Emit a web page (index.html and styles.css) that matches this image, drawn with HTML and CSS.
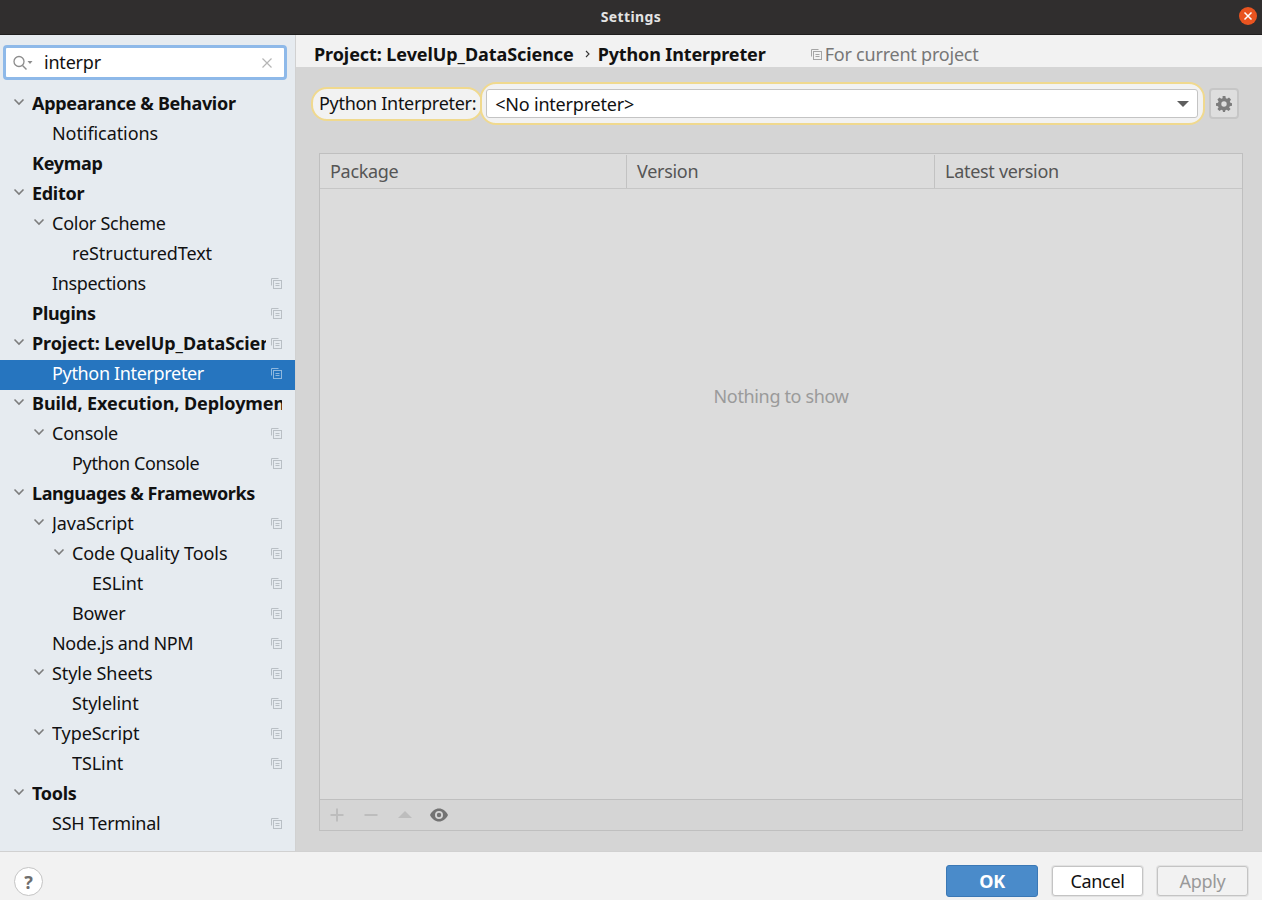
FILE: index.html
```html
<!DOCTYPE html>
<html lang="en">
<head>
<meta charset="utf-8">
<title>Settings</title>
<link rel="stylesheet" href="styles.css">
</head>
<body>
<svg class="defs" width="0" height="0">
  <defs>
    <symbol id="copy" viewBox="0 0 12 12">
      <path d="M8.500 1.500H1.500V8.500" fill="none" stroke="currentColor"/>
      <rect x="3.500" y="3.500" width="8" height="8" fill="none" stroke="currentColor"/>
      <path d="M5.500 6.500h4M5.500 8.500h4" stroke="currentColor"/>
    </symbol>
    <symbol id="chev" viewBox="0 0 12 12">
      <path d="M1.500 3.500L6 8L10.500 3.500" fill="none" stroke="currentColor" stroke-width="1.600"/>
    </symbol>
  </defs>
</svg>
<div class="app">
  <header class="titlebar">
    <span class="title">Settings</span>
    <span class="close"><svg width="10" height="10" viewBox="0 0 10 10"><path d="M1.500 1.500L8.500 8.500M8.500 1.500L1.500 8.500" stroke="#fff" stroke-width="1.500"/></svg></span>
  </header>
  <div class="mid">
    <aside class="sidebar">
      <div class="search">
        <svg class="search-ic" width="22" height="16" viewBox="0 0 22 16"><circle cx="7" cy="6.500" r="5" fill="none" stroke="#8c8c8c" stroke-width="1.300"/><path d="M10.500 10.500L14.500 14.500" stroke="#8c8c8c" stroke-width="1.500"/><path d="M15.500 6h5l-2.500 3z" fill="#8c8c8c"/></svg>
        <span class="search-text">interpr</span>
        <svg class="search-x" width="10" height="10" viewBox="0 0 10 10"><path d="M0.500 0.500L9.500 9.500M9.500 0.500L0.500 9.500" stroke="#b5b5b5" stroke-width="1.200"/></svg>
      </div>
      <nav class="tree">
        <div class="row l0 b"><svg class="chev"><use href="#chev"/></svg><span class="name">Appearance &amp; Behavior</span></div>
        <div class="row l1"><span class="name loose">Notifications</span></div>
        <div class="row l0 b"><span class="name">Keymap</span></div>
        <div class="row l0 b"><svg class="chev"><use href="#chev"/></svg><span class="name">Editor</span></div>
        <div class="row l1"><svg class="chev"><use href="#chev"/></svg><span class="name">Color Scheme</span></div>
        <div class="row l2"><span class="name loose">reStructuredText</span></div>
        <div class="row l1"><span class="name tight">Inspections</span><svg class="cp"><use href="#copy"/></svg></div>
        <div class="row l0 b"><span class="name">Plugins</span><svg class="cp"><use href="#copy"/></svg></div>
        <div class="row l0 b"><svg class="chev"><use href="#chev"/></svg><span class="name wide">Project: LevelUp_DataScience</span><svg class="cp"><use href="#copy"/></svg></div>
        <div class="row l1 sel"><span class="name tight">Python Interpreter</span><svg class="cp"><use href="#copy"/></svg></div>
        <div class="row l0 b"><svg class="chev"><use href="#chev"/></svg><span class="name wide">Build, Execution, Deployment</span></div>
        <div class="row l1"><svg class="chev"><use href="#chev"/></svg><span class="name">Console</span><svg class="cp"><use href="#copy"/></svg></div>
        <div class="row l2"><span class="name tight">Python Console</span><svg class="cp"><use href="#copy"/></svg></div>
        <div class="row l0 b"><svg class="chev"><use href="#chev"/></svg><span class="name narrow">Languages &amp; Frameworks</span></div>
        <div class="row l1"><svg class="chev"><use href="#chev"/></svg><span class="name loose">JavaScript</span><svg class="cp"><use href="#copy"/></svg></div>
        <div class="row l2"><svg class="chev"><use href="#chev"/></svg><span class="name loose">Code Quality Tools</span><svg class="cp"><use href="#copy"/></svg></div>
        <div class="row l3"><span class="name loose">ESLint</span><svg class="cp"><use href="#copy"/></svg></div>
        <div class="row l2"><span class="name loose">Bower</span><svg class="cp"><use href="#copy"/></svg></div>
        <div class="row l1"><span class="name tight">Node.js and NPM</span><svg class="cp"><use href="#copy"/></svg></div>
        <div class="row l1"><svg class="chev"><use href="#chev"/></svg><span class="name loose">Style Sheets</span><svg class="cp"><use href="#copy"/></svg></div>
        <div class="row l2"><span class="name loose">Stylelint</span><svg class="cp"><use href="#copy"/></svg></div>
        <div class="row l1"><svg class="chev"><use href="#chev"/></svg><span class="name loose">TypeScript</span><svg class="cp"><use href="#copy"/></svg></div>
        <div class="row l2"><span class="name loose">TSLint</span><svg class="cp"><use href="#copy"/></svg></div>
        <div class="row l0 b"><svg class="chev"><use href="#chev"/></svg><span class="name">Tools</span></div>
        <div class="row l1"><span class="name">SSH Terminal</span><svg class="cp"><use href="#copy"/></svg></div>
      </nav>
    </aside>
    <main class="main">
      <div class="crumbs">
        <span class="crumb">Project: LevelUp_DataScience</span>
        <svg class="crumb-sep" width="5" height="8" viewBox="0 0 5 8"><path d="M1 1L4 4L1 7" fill="none" stroke="#333" stroke-width="1.100"/></svg>
        <span class="crumb">Python Interpreter</span>
        <span class="scope"><svg class="cp scope-ic"><use href="#copy"/></svg>For current project</span>
      </div>
      <div class="content">
        <div class="interp">
          <label class="interp-label">Python Interpreter:</label>
          <div class="combo-glow">
            <div class="combo">
              <span>&lt;No interpreter&gt;</span>
              <svg width="12" height="6" viewBox="0 0 12 6"><path d="M0 0h12L6 6z" fill="#5e5e5e"/></svg>
            </div>
          </div>
          <button class="gear">
            <svg width="16" height="16" viewBox="0 0 16 16"><path fill="#7d7d7d" fill-rule="evenodd" d="M6.600 0h2.800l.4 2.200 1.300.6L13 1.600l2 2-1.200 1.900.6 1.300L16 7.200v2.600l-2.200.4-.6 1.300L14.600 13l-2 2-1.900-1.300-1.300.6L9 16H7l-.4-1.700-1.300-.6L3.400 15l-2-2 1.200-1.500-.6-1.300L0 9.800V7.200l2-.4.600-1.300L1.400 3.600l2-2 1.900 1.200 1.300-.6zM8 5.300a2.700 2.700 0 1 0 0 5.400 2.700 2.700 0 0 0 0-5.400z"/></svg>
          </button>
        </div>
        <section class="table">
          <div class="thead">
            <div class="th">Package</div>
            <div class="th">Version</div>
            <div class="th">Latest version</div>
          </div>
          <div class="tbody">Nothing to show</div>
          <div class="toolbar">
            <svg width="18" height="14" viewBox="0 0 18 14"><path d="M9 .5v13M2.500 7h13" stroke="#bdbdbd" stroke-width="2"/></svg>
            <svg width="18" height="14" viewBox="0 0 18 14"><path d="M2.500 7h13" stroke="#bdbdbd" stroke-width="2"/></svg>
            <svg width="18" height="14" viewBox="0 0 18 14"><path d="M9 3l7 7H2z" fill="#bdbdbd"/></svg>
            <svg width="18" height="14" viewBox="0 0 18 14"><path fill="#737373" fill-rule="evenodd" d="M9 .5c3.800 0 7 2.600 9 6.500-2 3.900-5.200 6.500-9 6.500S2 10.900 0 7C2 3.100 5.200.5 9 .5zM9 3a4 4 0 1 0 0 8 4 4 0 0 0 0-8z"/><circle cx="9" cy="7" r="2.200" fill="#737373"/></svg>
          </div>
        </section>
      </div>
    </main>
  </div>
  <footer class="footer">
    <button class="help">?</button>
    <div class="actions">
      <button class="btn ok">OK</button>
      <button class="btn">Cancel</button>
      <button class="btn off">Apply</button>
    </div>
  </footer>
</div>
</body>
</html>
```
FILE: styles.css
```css
* { box-sizing: border-box; }
html, body { margin: 0; padding: 0; }
body { width: 1262px; height: 900px; overflow: hidden; font-family: "Noto Sans", "Open Sans", sans-serif; font-size: 18px; color: #111; }
.defs { position: absolute; }
.app { display: flex; flex-direction: column; height: 900px; background: #f2f2f2; }

.titlebar { height: 35px; flex: none; background: #302e2e; border-bottom: 1px solid #1f1e1e; display: flex; align-items: center; justify-content: center; padding-bottom: 2px; position: relative; }
.title { font-size: 14px; font-weight: 700; color: #e3e3e3; letter-spacing: .4px; }
.close { position: absolute; right: 5px; top: 7px; width: 18px; height: 18px; border-radius: 50%; background: #e95420; display: flex; align-items: center; justify-content: center; }

.mid { flex: 1; display: flex; min-height: 0; }
.sidebar { width: 296px; flex: none; background: #e6ebf0; border-right: 1px solid #d1d1d1; padding-top: 10px; }
.search { margin: 0 8px 0 3px; height: 35px; border: 3px solid #8eb9e9; border-radius: 4px; background: #fff; display: flex; align-items: center; padding: 0 12px 0 6px; }
.search-ic { flex: none; }
.search-text { margin-left: 10px; flex: 1; letter-spacing: -.2px; padding-bottom: 2px; }
.tree { margin-top: 10px; }

.row { height: 30px; display: flex; align-items: center; position: relative; padding: 0 13px 4px 0; }
.l0 { padding-left: 32px; }
.l1 { padding-left: 52px; }
.l2 { padding-left: 72px; }
.l3 { padding-left: 92px; }
.b { font-weight: 700; }
.name { flex: 1; min-width: 0; white-space: nowrap; overflow: hidden; letter-spacing: -.25px; }
.b .name { letter-spacing: -.3px; }
.name.tight { letter-spacing: -.34px; }
.name.loose { letter-spacing: -.08px; }
.b .name.wide { letter-spacing: -.08px; }
.b .name.narrow { letter-spacing: -.4px; }
.chev { position: absolute; width: 12px; height: 12px; color: #7d7d7d; top: 6px; margin-left: -19px; }
.row .cp { flex: none; margin-left: 4px; }
.cp { width: 12px; height: 12px; color: #b9bfc5; }
.sel { background: #2675bf; color: #fff; }
.sel .cp { color: #8fb8de; }

.main { flex: 1; min-width: 0; display: flex; flex-direction: column; background: #d5d5d5; }
.crumbs { height: 32px; flex: none; background: #f2f2f2; display: flex; align-items: center; padding: 6px 0 0 18px; }
.crumb { font-weight: 700; letter-spacing: -.08px; }
.crumb + .crumb-sep + .crumb { letter-spacing: -.13px; }
.crumb-sep { margin: 0 8px 0 11px; }
.scope { margin-left: 44px; color: #777; display: flex; align-items: center; gap: 3px; letter-spacing: -.22px; }
.scope-ic { color: #a5a5a5; }

.content { flex: 1; min-height: 0; display: flex; flex-direction: column; padding: 15px 19px 20px 15px; }
.interp { display: flex; align-items: center; height: 43px; margin-right: 4px; }
.interp-label { height: 34px; display: flex; align-items: center; padding: 0 5px 2px 6px; background: #f2f2f2; border: 2px solid #f0d98e; border-radius: 16px; letter-spacing: -.3px; white-space: nowrap; }
.combo-glow { flex: 1; height: 43px; padding: 5px 5px 5px 4px; background: #f2f2f2; border: 2px solid #f0d98e; border-radius: 16px; margin-left: -3px; }
.combo { height: 29px; background: #fff; border: 1px solid #c4c4c4; border-radius: 3px; display: flex; align-items: center; justify-content: space-between; padding: 0 8px 0 8px; letter-spacing: -.2px; }
.gear { width: 30px; height: 31px; margin-left: 4px; flex: none; padding: 0; background: #dedede; border: 2px solid #c6c6c6; border-radius: 4px; display: flex; align-items: center; justify-content: center; }

.table { flex: 1; min-height: 0; margin: 28px 0 0 8px; background: #dcdcdc; border: 1px solid #bfbfbf; display: flex; flex-direction: column; }
.thead { height: 35px; flex: none; display: grid; grid-template-columns: 306px 308px 1fr; border-bottom: 1px solid #c6c6c6; align-items: center; }
.th { padding-left: 10px; height: 33px; line-height: 33px; color: #555; letter-spacing: -.3px; border-left: 1px solid #c2c2c2; }
.th:first-child { border-left: 0; }
.tbody { flex: 1; min-height: 0; display: flex; align-items: center; justify-content: center; color: #9a9a9a; letter-spacing: -.35px; padding-bottom: 196px; }
.toolbar { height: 31px; flex: none; background: #d5d5d5; border-top: 1px solid #bfbfbf; display: flex; align-items: center; gap: 16px; padding-left: 8px; }

.footer { height: 49px; flex: none; border-top: 1px solid #d1d1d1; display: flex; justify-content: space-between; padding: 13px 14px 0 14px; }
.help { width: 29px; height: 29px; margin-top: 2px; padding: 0; border-radius: 50%; background: #fff; border: 1px solid #c4c4c4; color: #6e6e6e; font: 700 18px "Noto Sans", sans-serif; }
.actions { display: flex; gap: 14px; align-items: flex-start; }
.btn { width: 91px; height: 30px; margin-top: 1px; padding: 0; background: #fff; border: 1px solid #c4c4c4; border-radius: 3px; color: #111; font: 18px "Noto Sans", sans-serif; letter-spacing: -.3px; box-shadow: 0 0 0 1px #e2e2e2; }
.btn.ok { width: 92px; height: 32px; margin-top: 0; background: #4a8bca; border-color: #3b78b5; color: #fff; font-weight: 700; box-shadow: none; }
.btn.off { background: #f2f2f2; color: #999; }
```
